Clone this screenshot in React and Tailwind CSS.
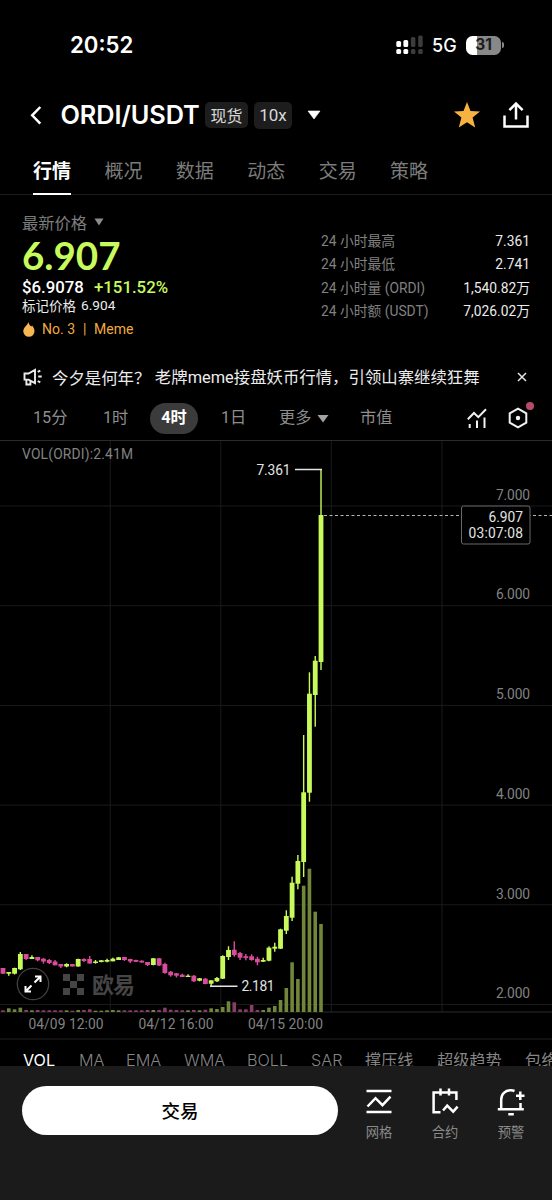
import React from "react";

const GREEN = "#c8fa5c";
const PINK = "#d84c9b";

// Each candle: [rising, bodyTop, bodyBottom, wickTop, wickBottom, volumeTop]
const candles = [
  [0, 968, 973.7, 968, 974, 1010.3],
  [1, 972, 973.7, 972, 975.8, 1008.3],
  [1, 968, 973.7, 967.7, 974.5, 1009.3],
  [1, 954, 969.3, 952, 970, 1007.7],
  [0, 954, 959, 954, 960, 1010],
  [1, 957, 959, 955.3, 959, 1010.3],
  [0, 957, 960.3, 957, 961.3, 1010],
  [0, 958.7, 961.5, 958, 963.7, 1010.3],
  [0, 960, 963, 959, 964, 1010.3],
  [0, 961.5, 965.3, 960, 965.3, 1010.3],
  [0, 964, 966.5, 964, 968, 1010.3],
  [1, 964, 966.5, 963.3, 967.3, 1010.3],
  [0, 964, 966.5, 964, 966.5, 1010.7],
  [1, 959, 966.5, 958.7, 966.7, 1010],
  [0, 959, 961, 958.3, 962, 1010],
  [0, 959, 963.5, 956, 963.7, 1009.3],
  [1, 961.5, 963, 960, 963.7, 1010.7],
  [1, 960.3, 962, 960, 962.3, 1010.7],
  [1, 960, 961.7, 958.7, 962.3, 1010.3],
  [1, 958.7, 961.3, 957.7, 961.3, 1010],
  [1, 957.3, 960, 957, 960, 1010.3],
  [0, 957, 960, 957, 961, 1010.3],
  [0, 959, 961.5, 958.7, 963, 1010.3],
  [0, 960, 961.8, 959.7, 962, 1010.3],
  [0, 960.7, 962.5, 960.3, 962.7, 1010.3],
  [0, 962, 965, 962, 966, 1010],
  [1, 958.3, 965, 958, 965.3, 1010],
  [0, 958.3, 965.5, 958, 966, 1010],
  [0, 964, 973, 962.7, 973.7, 1007.7],
  [0, 971.7, 975.3, 971, 976.7, 1009.7],
  [0, 973.3, 975.7, 973, 977.5, 1010],
  [0, 974.7, 977, 973.7, 977, 1010.3],
  [1, 975.7, 977, 974.3, 977, 1010.3],
  [0, 975.7, 981.3, 975, 982, 1010],
  [1, 978.3, 980.7, 978, 981.3, 1010.3],
  [0, 978.7, 984, 978, 984.3, 1009.7],
  [1, 980.3, 983.7, 980.3, 986, 1008.3],
  [1, 978, 981.3, 977, 982, 1009],
  [1, 956, 978.7, 955.3, 979, 1007],
  [1, 950, 957, 946.3, 960, 1001.3],
  [0, 949.7, 955, 941.3, 956.7, 1002.3],
  [0, 953, 957.7, 952, 960, 1009.3],
  [0, 956.3, 958, 954, 960.3, 1009.3],
  [0, 956.3, 960, 954.3, 960.7, 1005],
  [0, 958.7, 962.3, 956.7, 965.3, 1010],
  [1, 960, 961.7, 957.7, 962, 1010],
  [1, 947.7, 960.7, 946.3, 961.3, 1007.7],
  [1, 946.7, 948.7, 942.7, 951.7, 1006],
  [1, 929.3, 948.7, 928.7, 949, 1000],
  [1, 916, 930.7, 910.3, 934, 988],
  [1, 882.7, 917.7, 876.7, 921, 962.3],
  [1, 861, 883.7, 855, 889.3, 979],
  [1, 792.3, 862, 735, 877, 885.7],
  [1, 693.7, 792.7, 672.3, 801.7, 868.7],
  [1, 660.7, 695, 656, 726.7, 911.7],
  [1, 515, 662, 469.3, 670, 924],
];

const gridRows = [506, 605.7, 705.4, 805.1, 904.8, 1004.5];
const gridCols = [110.3, 220.8, 331.3, 442];

function StatusBar() {
  return (
    <div className="flex h-[90px] shrink-0 items-center pl-[70px] pr-[48px]">
      <span className="font-['Inter'] text-[22.2px] leading-none font-semibold">20:52</span>
      <svg className="ml-auto" width="28" height="20" viewBox="0 0 28 20">
        <g fill="#fff">
          <rect x="0.3" y="6" width="4.8" height="6" rx="1.6" />
          <rect x="0.3" y="14" width="4.8" height="5" rx="1.6" />
          <rect x="7.4" y="5" width="4.8" height="7" rx="1.6" />
          <rect x="7.4" y="14" width="4.8" height="5" rx="1.6" />
        </g>
        <g fill="#3c3c3c">
          <rect x="14.9" y="2" width="4.5" height="10" rx="1.6" />
          <rect x="14.9" y="14" width="4.5" height="5" rx="1.6" />
          <rect x="22.2" y="0.5" width="4.5" height="11.5" rx="1.6" />
          <rect x="22.2" y="14" width="4.5" height="5" rx="1.6" />
        </g>
      </svg>
      <span className="ml-[8px] w-[27px] pt-[2px] font-['Inter'] text-[18px] leading-none font-medium">5G</span>
      <div className="ml-[7px] flex h-[19px] w-[35px] items-center justify-center rounded-[6.5px] bg-linear-to-r from-white from-31% to-[#888] to-31% font-['Inter'] text-[15.5px] leading-none font-bold text-[#1c1c1c]">
        31
      </div>
      <div className="ml-[1px] h-[6px] w-[2px] rounded-r-full bg-[#888]" />
    </div>
  );
}

function Header() {
  return (
    <div className="flex h-[50px] shrink-0 items-center pl-[29px] pr-[23px]">
      <svg width="14" height="20" viewBox="0 0 14 20" fill="none" stroke="#fff" strokeWidth="2.5">
        <path d="M11.3 2 3.2 10.3l8.1 8.3" />
      </svg>
      <h1 className="ml-[17.5px] w-[138.5px] font-['Inter'] text-[25.300px] leading-none font-semibold tracking-[-0.1px] whitespace-nowrap">ORDI/USDT</h1>
      <span className="ml-[6px] flex h-[26px] w-[43px] items-center justify-center rounded-[5px] bg-[#1d1d1d] text-[16px] leading-none text-[#d8d8d8]">现货</span>
      <span className="ml-[6px] flex h-[27px] w-[38px] items-center justify-center rounded-[5px] bg-[#1d1d1d] font-['Roboto'] text-[17px] leading-none text-[#d8d8d8]">10x</span>
      <svg className="ml-[15px]" width="14" height="10" viewBox="0 0 14 10">
        <path d="M1 1h12L7 9z" fill="#fff" stroke="#fff" strokeWidth=".6" strokeLinejoin="round" />
      </svg>
      <svg className="ml-auto" width="28" height="28" viewBox="0 0 28 28">
        <path d="m14 1 3.5 9 9.5.4-7.4 6 2.6 10.1L14 21.2l-8.200 5.300 2.600-10.100-7.400-6 9.500-.4z" fill="#f7b23f" />
      </svg>
      <svg className="ml-[22px]" width="26" height="28" viewBox="0 0 26 28" fill="none" stroke="#fff" strokeWidth="2.5">
        <path d="M1.500 14.500v11h23v-11M13 18.500V3M6.400 9.200 13 2.600l6.600 6.600" />
      </svg>
    </div>
  );
}

function Tabs() {
  return (
    <nav className="flex h-[55px] shrink-0 gap-[33.4px] border-b border-[#1b1b1b] pl-[33px] text-[19px] leading-[60px] text-[#7c7c7c]">
      <span className="relative h-[55px] font-bold text-white">
        行情
        <i className="absolute bottom-0 left-0 h-[2px] w-[38px] bg-white" />
      </span>
      {["概况", "数据", "动态", "交易", "策略"].map((t) => (
        <span key={t}>{t}</span>
      ))}
    </nav>
  );
}

function Stats() {
  const rows = [
    ["24 小时最高", "7.361"],
    ["24 小时最低", "2.741"],
    ["24 小时量 (ORDI)", "1,540.82万"],
    ["24 小时额 (USDT)", "7,026.02万"],
  ];
  return (
    <section className="flex h-[157px] shrink-0 justify-between pr-[22px] pl-[22px]">
      <div className="flex flex-col pt-[15px]">
        <div className="flex h-[24px] items-center gap-[7px] text-[16.3px] leading-none text-[#7c7c7c]">
          最新价格
          <svg width="10" height="8" viewBox="0 0 10 8">
            <path d="M.5.500h9L5 7.500z" fill="#8c8c8c" />
          </svg>
        </div>
        <div className="flex h-[43px] items-center font-['Lato'] text-[38.500px] leading-none font-bold text-[#c8fa5c]">6.907</div>
        <div className="flex h-[20px] items-center font-['Roboto'] text-[16.800px] leading-none font-medium">
          <span className="w-[72px]">$6.9078</span>
          <span className="text-[#c8fa5c]">+151.52%</span>
        </div>
        <div className="flex h-[17px] items-center gap-[5px] text-[13.500px] leading-none text-[#ececec]">
          标记价格 <span className="font-['Roboto'] text-[13.700px]">6.904</span>
        </div>
        <div className="mt-[5px] flex h-[20px] items-center font-['Roboto'] text-[14px] leading-none text-[#f0ab40]">
          <svg width="14" height="17" viewBox="0 0 14 17">
            <path d="M6.500 1c.3 2.200 1.500 3.300 2.800 4.600l.8-1c1.200 1.500 2.400 3.400 2.400 5.600a5.600 5.600 0 0 1-11.200 0C1.300 6.500 5.200 4.600 6.500 1z" fill="#f7b554" />
          </svg>
          <span className="ml-[6px] w-[41px] whitespace-nowrap">No. 3</span>
          <span className="w-[11px]">|</span>
          <span>Meme</span>
        </div>
      </div>
      <div className="flex w-[209px] flex-col pt-[35px] text-[13.800px]">
        {rows.map(([k, v]) => (
          <div key={k} className="flex h-[23.400px] items-center justify-between leading-none">
            <span className="font-['Roboto','Noto_Sans_CJK_SC'] text-[#808080]">{k}</span>
            <span className="font-['Roboto','Noto_Sans_CJK_SC'] text-[#ececec]">{v}</span>
          </div>
        ))}
      </div>
    </section>
  );
}

function Notice() {
  return (
    <div className="flex h-[50px] shrink-0 items-center pl-[23px] text-[16.400px] leading-none text-[#ececec]">
      <svg width="20" height="18" viewBox="0 0 20 18" fill="none" stroke="#ececec" strokeWidth="1.900">
        <path d="M1.500 5.500h4L12 1.800v13.400l-6.500-3.600h-4zM3.400 11.700v4.800h4v-4M14.700 3.900l2.600-1.300M15.200 8.500h3.500M14.700 13l2.600 1.400" />
      </svg>
      <span className="ml-[9px] whitespace-nowrap">今夕是何年？</span>
      <span className="ml-[4.500px] whitespace-nowrap">老牌<span className="font-['Roboto']">meme</span>接盘妖币行情，引领山寨继续狂舞</span>
      <svg className="mr-[25px] ml-auto" width="10" height="10" viewBox="0 0 10 10" stroke="#e5e5e5" strokeWidth="1.500">
        <path d="m1 1 8 8M9 1 1 9" />
      </svg>
    </div>
  );
}

function Intervals() {
  return (
    <div className="flex h-[38px] shrink-0 items-center pb-[6px] pl-[33px] font-['Roboto','Noto_Sans_CJK_SC'] text-[16.200px] leading-none text-[#8e8e8e]">
      <span className="w-[70px]">15分</span>
      <span className="w-[47px]">1时</span>
      <span className="flex h-[31px] w-[48px] items-center justify-center rounded-full bg-[#3b3b3b] font-bold text-white">4时</span>
      <span className="ml-[23px] w-[58px]">1日</span>
      <span className="w-[38px]">更多</span>
      <svg width="12" height="9" viewBox="0 0 12 9">
        <path d="M.5 1h11L6 8.500z" fill="#a2a2a2" />
      </svg>
      <span className="ml-[31px] w-[107px]">市值</span>
      <svg width="20" height="22" viewBox="0 0 20 22" fill="none" stroke="#f2f2f2" strokeWidth="2">
        <path d="M.8 12.300 7 6l4.300 4.200L19 2.300M2.700 17v4M10 13.500V21M17.500 10.500V21" />
      </svg>
      <div className="relative ml-[21px]">
        <svg width="20" height="22" viewBox="0 0 20 22" fill="none" stroke="#f2f2f2" strokeWidth="2">
          <path d="m10 1.600 8.300 4.700v9.400L10 20.400l-8.300-4.700V6.300z" />
          <circle cx="10" cy="11" r="2.200" fill="#f2f2f2" stroke="none" />
        </svg>
        <i className="absolute -top-[5px] left-[18px] h-[8px] w-[8px] rounded-full bg-[#b84c68]" />
      </div>
    </div>
  );
}

function Chart() {
  const f = "Roboto, sans-serif";
  return (
    <svg className="block shrink-0" width="552" height="600" viewBox="0 440 552 600">
      <g stroke="#1a1a1a" strokeWidth="1">
        {gridRows.map((y) => (
          <path key={y} d={`M0 ${y}H552`} />
        ))}
        {gridCols.map((x) => (
          <path key={x} d={`M${x} 440V1012`} />
        ))}
      </g>
      <path d="M0 440.500H552M0 1012H552" stroke="#2b2b2b" />
      <path d="M0 1039H552" stroke="#222" />

      <g fill="#454545">
        <path d="M63 974h7v7h-7zM77 974h7v7h-7zM70 981h7v7h-7zM63 988h7v7h-7zM77 988h7v7h-7z" />
        <text x="92" y="993" fontFamily="'Noto Sans CJK SC', sans-serif" fontSize="22" fontWeight="700" textLength="43">欧易</text>
      </g>

      {candles.map(([up, top, bottom, high, low, vol], i) => {
        const x = 3 + i * 5.782;
        const color = up ? GREEN : PINK;
        return (
          <g key={i}>
            <rect x={x - 1.8} y={vol} width="3.600" height={1012 - vol} fill={up ? "#71863a" : "#8c3c68"} />
            <rect x={x - 0.7} y={high} width="1.400" height={low - high} fill={color} />
            <rect x={x - 2.4} y={top} width="4.800" height={bottom - top} fill={color} />
          </g>
        );
      })}

      <path d="M295 469.500H322M210 986.300H237.500" stroke="#e4e4e4" strokeWidth="1.500" />
      <path d="M324 515.500H552" stroke="#b4b4b4" strokeDasharray="3 2.500" />

      <circle cx="33" cy="984" r="15.700" fill="#000" fillOpacity=".85" stroke="#414141" strokeWidth="1.300" />
      <g fill="none" stroke="#fff" strokeWidth="2">
        <path d="M34.500 982.500 40.500 976.500M35 976.500h5.500v5.500M31.500 985.500l-6 6M25.500 986v5.500h5.500" />
      </g>

      <g fontFamily={f} fontSize="13.800">
        <g fill="#828282">
          <text x="22" y="459" textLength="111">VOL(ORDI):2.41M</text>
          {["7.000", "6.000", "5.000", "4.000", "3.000", "2.000"].map((t, i) => (
            <text key={t} x="496" y={499.5 + i * 99.75} textLength="34">{t}</text>
          ))}
          <text x="28.500" y="1029" textLength="75">04/09 12:00</text>
          <text x="138.500" y="1029" textLength="75">04/12 16:00</text>
          <text x="248" y="1029" textLength="75">04/15 20:00</text>
        </g>
        <rect x="461.500" y="506" width="68.500" height="38" rx="2" fill="#000" stroke="#6a6a6a" />
        <g fill="#e4e4e4">
          <text x="256.500" y="474.500" textLength="34">7.361</text>
          <text x="241.500" y="991.200" textLength="33">2.181</text>
          <text x="488.500" y="521.500" textLength="34.500">6.907</text>
          <text x="468.500" y="537.800" textLength="54.500">03:07:08</text>
        </g>
      </g>
    </svg>
  );
}

function Indicators() {
  return (
    <div className="flex h-[26px] shrink-0 overflow-hidden pl-[23px] font-['Inter','Noto_Sans_CJK_SC'] text-[16.200px] leading-[41px] whitespace-nowrap text-[#858585]">
      <span className="w-[56px] shrink-0 text-white">VOL</span>
      <span className="w-[47px] shrink-0 font-light">MA</span>
      <span className="w-[58px] shrink-0 font-light">EMA</span>
      <span className="w-[63px] shrink-0 font-light">WMA</span>
      <span className="w-[64px] shrink-0 font-light">BOLL</span>
      <span className="w-[54px] shrink-0 font-light">SAR</span>
      <span className="w-[72px] shrink-0">撑压线</span>
      <span className="w-[88px] shrink-0">超级趋势</span>
      <span className="shrink-0">包络线</span>
    </div>
  );
}

function BottomBar() {
  const items = [
    ["网格", <path key="g" d="M1.500 3h25M1.500 24h25M2.500 18.500l8-8.300 7 7 8-8.500" />],
    ["合约", <path key="c" d="M9.500 24.200H2.600V4.500h22.800V12M9.500.500v7M18 .500v7M12 22.500l4.200-4.800 6 6 4.400-5" />],
    ["预警", <path key="a" d="M.8 21.300h26M4.200 21.300V11.500c0-5.500 4-9.300 9.600-9.300 1.300 0 2.600.300 3.700.8M23.500 21V15M23.300 3.500v8.500M19 7.800h8.500M11.300 26.300h5.500" />],
  ];
  return (
    <footer className="flex h-[134px] shrink-0 bg-[#1b1b1b] pt-[20px] pl-[22px]">
      <button className="h-[49px] w-[316px] rounded-full bg-white text-[18.500px] leading-none font-medium text-black">交易</button>
      <div className="ml-[8px] flex">
        {items.map(([label, icon]) => (
          <div key={label} className="flex w-[66px] flex-col items-center gap-[9px] text-[13.300px] leading-none text-[#8a8a8a]">
            <svg className="mt-[2px]" width="28" height="28" viewBox="0 0 28 28" fill="none" stroke="#fff" strokeWidth="2.500">
              {icon}
            </svg>
            {label}
          </div>
        ))}
      </div>
    </footer>
  );
}

export default function App() {
  return (
    <main className="flex h-[1200px] w-[552px] flex-col overflow-hidden bg-black font-['Noto_Sans_CJK_SC',sans-serif] text-white">
      <StatusBar />
      <Header />
      <Tabs />
      <Stats />
      <Notice />
      <Intervals />
      <Chart />
      <Indicators />
      <BottomBar />
    </main>
  );
}
